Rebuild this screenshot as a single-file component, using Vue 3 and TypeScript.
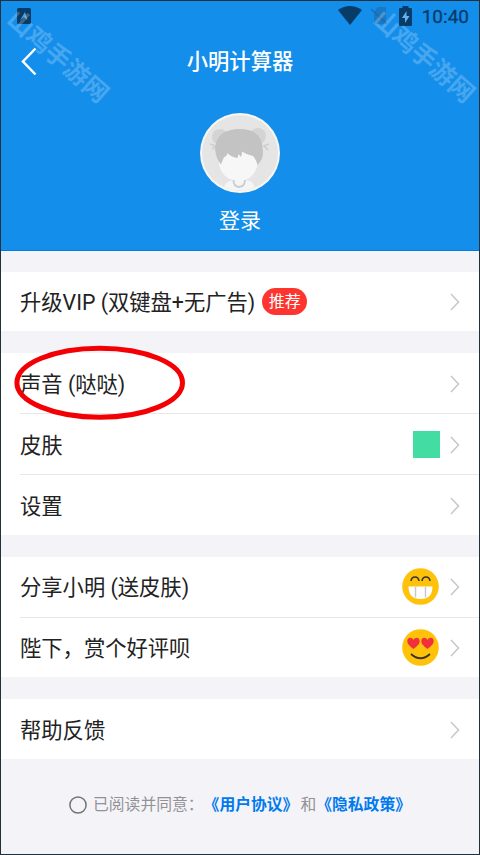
<script setup lang="ts">
interface Item {
  label: string
  badge?: string
  extra?: 'skin' | 'grin' | 'love'
  marked?: boolean
}

const groups: Item[][] = [
  [{ label: '升级VIP (双键盘+无广告)', badge: '推荐' }],
  [{ label: '声音 (哒哒)', marked: true }, { label: '皮肤', extra: 'skin' }, { label: '设置' }],
  [
    { label: '分享小明 (送皮肤)', extra: 'grin' },
    { label: '陛下，赏个好评呗', extra: 'love' },
  ],
  [{ label: '帮助反馈' }],
]
</script>

<template>
  <main class="screen">
    <header class="header">
      <div class="status">
        <svg class="app-icon" width="14" height="16" viewBox="0 0 14 16">
          <rect width="14" height="16" rx="1.500" fill="#073b68" />
          <path d="M3 12.500 8 4l2.500 8L7 9Z" fill="#599fd5" />
        </svg>
        <div class="status-right">
          <svg width="24" height="19" viewBox="0 0 24 19">
            <path d="M0 4Q12-4 24 4L12 19Z" fill="#073b68" />
          </svg>
          <svg class="sim" width="18" height="20" viewBox="0 0 18 20">
            <path d="M8 1h7q1 0 1 1v16H4V6Z" fill="#20649e" opacity=".5" />
            <path d="m1 3 16 15" stroke="#20649e" stroke-width="1.500" opacity=".7" />
          </svg>
          <svg class="battery" width="13" height="20" viewBox="0 0 13 20">
            <path d="M3.5 0h6v2H12q1 0 1 1v16q0 1-1 1H1q-1 0-1-1V3q0-1 1-1h2.5Z" fill="#073b68" />
            <path d="M7.500 5 3 12h3v5l4.500-7H7.500Z" fill="#66b2eb" />
          </svg>
          <span class="time">10:40</span>
        </div>
      </div>
      <div class="nav">
        <svg class="back" width="16" height="30" viewBox="0 0 16 30">
          <path d="M14.500 1.500 2 14.500l12.500 13" fill="none" stroke="#fff" stroke-width="2.500" />
        </svg>
        <h1>小明计算器</h1>
      </div>
      <div class="profile">
        <svg width="80" height="80" viewBox="0 0 80 80">
          <defs><clipPath id="face"><circle cx="40" cy="40" r="37.500" /></clipPath></defs>
          <circle cx="40" cy="40" r="40" fill="#f8f6f2" />
          <circle cx="40" cy="40" r="38" fill="#e5e5e5" />
          <g clip-path="url(#face)">
            <path d="M24 80V74q1-5 9-7h14q7 2 8 8v5Z" fill="#f5f5f5" />
            <circle cx="20" cy="24" r="8" fill="#d4d4d4" />
            <circle cx="58" cy="23" r="8" fill="#d4d4d4" />
            <path d="m10 31 6 2-4 3m57-5-5 2 4 4" fill="none" stroke="#d0d0d0" stroke-width="1.800" />
            <path d="M19 38h39v10q-2 19-19 20-17-1-20-17Z" fill="#f7f7f7" />
            <path d="M15 38Q15 16 40 16q23 0 23 23 0 8-5.500 13-1-5-4.500-9-6-1-11-4.500 0 3-1 5.500l-2.500-3q-.5 2-1 4-7-1-10-5-1 4-3.500 4l-3 7.500q-5.500-7-5.500-13.500Z" fill="#c3c3c3" />
            <path d="M33.500 67q0 6.500 5.500 7 6-.5 6-7" fill="none" stroke="#cbcbcb" stroke-width="1.800" />
          </g>
        </svg>
        <div class="login">登录</div>
      </div>
      <div class="watermark left" aria-hidden="true">山鸡手游网</div>
      <div class="watermark right" aria-hidden="true">山鸡手游网</div>
    </header>

    <div class="groups">
      <section v-for="(group, g) in groups" :key="g" class="group">
        <div v-for="item in group" :key="item.label" class="row">
          <span class="label">{{ item.label }}</span>
          <span v-if="item.badge" class="badge">{{ item.badge }}</span>
          <div class="trailing">
            <i v-if="item.extra === 'skin'" class="swatch" />
            <svg v-else-if="item.extra" class="emoji" width="37" height="37" viewBox="0 0 37 37">
              <circle cx="18.500" cy="18.500" r="18.300" fill="#fec20b" />
              <template v-if="item.extra === 'grin'">
                <path d="M9 13q.5-4 4-4t4 4m3 0q.5-4 4-4t4 4" fill="none" stroke="#333" stroke-width="1.600" />
                <path d="M6.500 18.500h24q0 12.500-12 12.500t-12-12.500Z" fill="#fff" />
                <path d="M13.500 19v10.500m10-10.500v10.500" stroke="#c9c9c9" stroke-width="1.500" />
              </template>
              <template v-else>
                <path d="M11.500 20C7 16.500 5.300 14.500 5.300 12 5.300 8 10 7.500 11.500 11 13 7.500 17.700 8 17.700 12c0 2.500-1.700 4.500-6.200 8Z" fill="#f2303b" />
                <path d="M25.500 20c-4.500-3.500-6.200-5.500-6.200-8 0-4 4.700-4.500 6.200-1 1.500-3.500 6.200-3 6.200 1 0 2.500-1.700 4.500-6.200 8Z" fill="#f2303b" />
                <path d="M9 25q9.500 8.500 19 0" fill="none" stroke="#3b3125" stroke-width="1.800" />
              </template>
            </svg>
            <svg class="chevron" width="10" height="18" viewBox="0 0 10 18">
              <path d="m1 1 7.500 8L1 17" fill="none" stroke="#c7c7cb" stroke-width="1.500" />
            </svg>
          </div>
          <svg v-if="item.marked" class="mark" width="172" height="76" viewBox="0 0 172 76">
            <ellipse cx="85.700" cy="37.700" rx="82.800" ry="34.500" fill="none" stroke="#f30004" stroke-width="5" />
          </svg>
        </div>
      </section>
    </div>

    <footer class="agreement">
      <svg class="radio" width="18" height="18" viewBox="0 0 18 18">
        <circle cx="9" cy="9" r="8.100" fill="none" stroke="#747477" stroke-width="1.500" />
      </svg>
      <span>已阅读并同意：</span>
      <a>《用户协议》</a>
      <span class="and">和</span>
      <a>《隐私政策》</a>
    </footer>
  </main>
</template>

<style>
body {
  margin: 0;
}
</style>

<style scoped>
.screen {
  box-sizing: border-box;
  width: 480px;
  height: 855px;
  border: 1px solid #20313a;
  background: #f4f4f8;
  color: #222;
  font-family: Roboto, "Noto Sans CJK SC", sans-serif;
}
.header {
  position: relative;
  box-sizing: border-box;
  height: 250px;
  background: #138eeb;
  border-bottom: 1px solid #087bd1;
  color: #fff;
}
.status {
  display: flex;
  justify-content: space-between;
  height: 30px;
  padding: 0 10px 0 16px;
}
.app-icon {
  margin-top: 7px;
}
.status-right {
  display: flex;
  align-items: flex-start;
  padding-top: 5px;
}
.sim {
  margin-left: 8px;
}
.battery {
  margin-left: 11px;
}
.time {
  margin-left: 10px;
  color: #073b68;
  font-size: 19px;
  line-height: 22px;
  -webkit-text-stroke: 0.3px #073b68;
}
.nav {
  display: flex;
  align-items: center;
  height: 62px;
  padding-left: 20px;
}
.back {
  flex: none;
}
h1 {
  flex: 1;
  margin: 0 36px 0 0;
  font-size: 21.3px;
  font-weight: 500;
  line-height: 30px;
  text-align: center;
}
.profile {
  display: flex;
  flex-direction: column;
  align-items: center;
  padding-top: 20px;
}
.login {
  margin-top: 13px;
  font-size: 21px;
  line-height: 30px;
}
.watermark {
  position: absolute;
  top: 43px;
  width: 125px;
  color: rgba(255, 255, 255, 0.22);
  font-size: 25px;
  font-weight: 700;
  line-height: 26px;
  text-align: center;
  white-space: nowrap;
  transform: rotate(41.5deg);
}
.left {
  left: -6px;
}
.right {
  left: 360px;
}
.groups {
  display: flex;
  flex-direction: column;
  gap: 22px;
  padding-top: 21px;
}
.group {
  background: #fff;
}
.row {
  position: relative;
  box-sizing: border-box;
  display: flex;
  align-items: center;
  height: 60px;
  margin-left: 19px;
  padding-right: 19px;
}
.row + .row {
  height: 61px;
  border-top: 1px solid #e8e8eb;
}
.group:first-child .row {
  height: 59px;
}
.group:nth-child(3) .row + .row {
  height: 60px;
}
.group:nth-child(3) .row:first-child {
  padding-bottom: 1px;
}
.label {
  padding-top: 3px;
  font-size: 21.3px;
  line-height: 30px;
  white-space: nowrap;
}
.badge {
  width: 45px;
  height: 27px;
  margin-left: 7px;
  border-radius: 14px;
  background: #fd352e;
  color: #fff;
  font-size: 16px;
  line-height: 27px;
  text-align: center;
}
.trailing {
  display: flex;
  align-items: center;
  gap: 10px;
  margin-left: auto;
  padding-top: 1px;
}
.swatch {
  width: 27px;
  height: 27px;
  margin-top: -1px;
  background: #43dda4;
}
.emoji {
  margin: -1px 1px 0 0;
}
.mark {
  position: absolute;
  z-index: 1;
  left: -6px;
  top: -8px;
}
.agreement {
  display: flex;
  align-items: center;
  padding: 34px 0 0 68px;
  color: #929296;
  font-size: 15.8px;
  line-height: 24px;
  white-space: nowrap;
}
.radio {
  margin-right: 6px;
}
.agreement a {
  color: #007aee;
  font-weight: 700;
}
.and {
  margin-left: 2px;
}
</style>
